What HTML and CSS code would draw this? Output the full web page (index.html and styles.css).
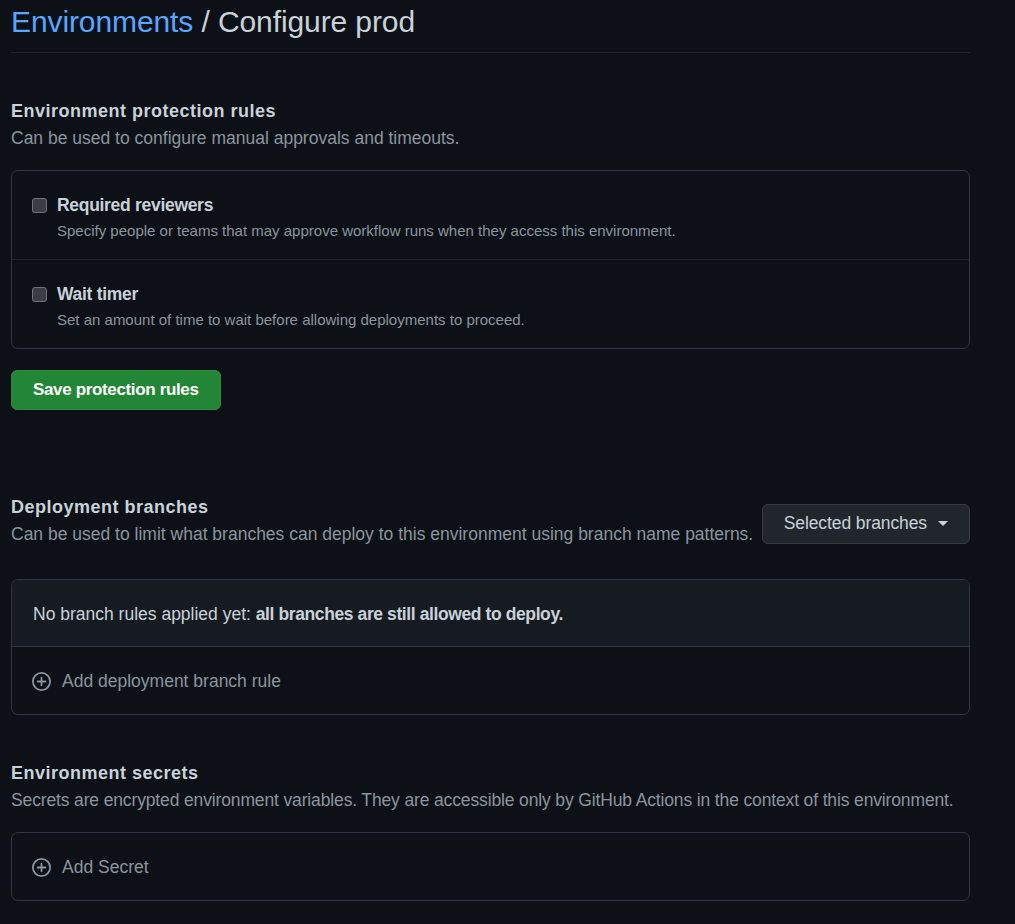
FILE: index.html
```html
<!DOCTYPE html>
<html lang="en">
<head>
<meta charset="utf-8">
<title>Configure prod</title>
<link rel="stylesheet" href="styles.css">
</head>
<body>
<div class="page">
  <div class="subhead">
    <h1 class="title"><a class="crumb" href="#">Environments</a> / Configure prod</h1>
  </div>

  <section class="section">
    <div class="section-head">
      <h2 class="heading">Environment protection rules</h2>
      <p class="desc">Can be used to configure manual approvals and timeouts.</p>
    </div>
    <div class="box">
      <label class="rule">
        <input type="checkbox" class="check">
        <span class="rule-text">
          <span class="rule-label">Required reviewers</span>
          <span class="rule-note">Specify people or teams that may approve workflow runs when they access this environment.</span>
        </span>
      </label>
      <label class="rule">
        <input type="checkbox" class="check">
        <span class="rule-text">
          <span class="rule-label">Wait timer</span>
          <span class="rule-note">Set an amount of time to wait before allowing deployments to proceed.</span>
        </span>
      </label>
    </div>
    <button class="btn btn-primary" type="button">Save protection rules</button>
  </section>

  <section class="section section-branches">
    <div class="head-row">
      <div class="section-head">
        <h2 class="heading">Deployment branches</h2>
        <p class="desc">Can be used to limit what branches can deploy to this environment using branch name patterns.</p>
      </div>
      <button class="btn btn-select" type="button">Selected branches <span class="caret"></span></button>
    </div>
    <div class="box box-branches">
      <div class="box-header">No branch rules applied yet: <strong>all branches are still allowed to deploy.</strong></div>
      <div class="box-row add-row">
        <svg class="plus" viewBox="0 0 16 16" width="19" height="19" aria-hidden="true"><path fill="currentColor" d="M8 0a8 8 0 1 1 0 16A8 8 0 0 1 8 0ZM1.5 8a6.5 6.5 0 1 0 13 0 6.5 6.5 0 0 0-13 0Zm7.25-3.25v2.5h2.5a.75.75 0 0 1 0 1.5h-2.5v2.5a.75.75 0 0 1-1.5 0v-2.5h-2.5a.75.75 0 0 1 0-1.5h2.5v-2.5a.75.75 0 0 1 1.5 0Z"/></svg>
        <span>Add deployment branch rule</span>
      </div>
    </div>
  </section>

  <section class="section">
    <div class="section-head">
      <h2 class="heading">Environment secrets</h2>
      <p class="desc desc-tight">Secrets are encrypted environment variables. They are accessible only by GitHub Actions in the context of this environment.</p>
    </div>
    <div class="box">
      <div class="box-row add-row">
        <svg class="plus" viewBox="0 0 16 16" width="19" height="19" aria-hidden="true"><path fill="currentColor" d="M8 0a8 8 0 1 1 0 16A8 8 0 0 1 8 0ZM1.5 8a6.5 6.5 0 1 0 13 0 6.5 6.5 0 0 0-13 0Zm7.25-3.25v2.5h2.5a.75.75 0 0 1 0 1.5h-2.5v2.5a.75.75 0 0 1-1.5 0v-2.5h-2.5a.75.75 0 0 1 0-1.5h2.5v-2.5a.75.75 0 0 1 1.5 0Z"/></svg>
        <span>Add Secret</span>
      </div>
    </div>
  </section>
</div>
</body>
</html>
```

FILE: styles.css
```css
* { box-sizing: border-box; }

html, body {
  margin: 0;
  background: #0d1117;
}

body {
  font-family: "Liberation Sans", Arial, sans-serif;
  color: #c9d1d9;
  font-size: 17.5px;
}

.page {
  width: 959px;
  margin-left: 11px;
}

.subhead {
  padding-top: 2px;
  padding-bottom: 10px;
  border-bottom: 1px solid #21262d;
}

.title {
  margin: 0;
  font-size: 30px;
  line-height: 40px;
  font-weight: 400;
  color: #c9d1d9;
  letter-spacing: -0.1px;
}

.crumb {
  color: #58a6ff;
  text-decoration: none;
}

.section {
  margin-top: 46px;
}

.section-branches {
  margin-top: 85px;
}

.heading {
  margin: 0;
  font-size: 18px;
  line-height: 24px;
  font-weight: 700;
  letter-spacing: 0.5px;
  color: #c9d1d9;
}

.desc {
  margin: 2px 0 0;
  font-size: 17.5px;
  line-height: 26px;
  color: #8b949e;
}

.desc-tight {
  letter-spacing: -0.14px;
  white-space: nowrap;
}

.box {
  margin-top: 19px;
  border: 1px solid #30363d;
  border-radius: 7px;
  overflow: hidden;
}

.box-branches {
  margin-top: 32px;
}

.rule {
  display: flex;
  align-items: flex-start;
  gap: 10px;
  padding: 22px 20px 17px;
}

.rule + .rule {
  border-top: 1px solid #21262d;
}

.check {
  appearance: none;
  -webkit-appearance: none;
  margin: 5px 0 0;
  width: 15px;
  height: 15px;
  flex: none;
  background: #3a3d43;
  border: 1px solid #6e7379;
  border-radius: 3px;
}

.rule-text {
  display: flex;
  flex-direction: column;
}

.rule-label {
  font-size: 17.5px;
  line-height: 24px;
  font-weight: 700;
  letter-spacing: -0.3px;
  color: #c9d1d9;
}

.rule-note {
  margin-top: 3px;
  font-size: 15px;
  line-height: 22px;
  color: #8b949e;
}

.btn {
  font-family: inherit;
  height: 40px;
  padding: 0 21px;
  border-radius: 6px;
  font-size: 17.5px;
  cursor: pointer;
}

.btn-primary {
  margin-top: 21px;
  display: block;
  background: #238636;
  border: 1px solid #2c8a3e;
  color: #ffffff;
  font-size: 17px;
  font-weight: 700;
  letter-spacing: -0.35px;
}

.head-row {
  display: flex;
  align-items: center;
  justify-content: space-between;
}

.btn-select {
  display: flex;
  align-items: center;
  gap: 11px;
  background: #21262d;
  border: 1px solid #363b42;
  color: #c9d1d9;
  font-weight: 400;
  margin-top: 5px;
  letter-spacing: -0.1px;
}

.caret {
  width: 0;
  height: 0;
  border-left: 5px solid transparent;
  border-right: 5px solid transparent;
  border-top: 5px solid #c9d1d9;
}

.box-header {
  background: #161b22;
  padding: 21px 21px 19px;
  line-height: 26px;
  border-bottom: 1px solid #30363d;
  color: #c9d1d9;
}

.box-header strong {
  font-weight: 700;
  letter-spacing: -0.4px;
}

.box-row {
  padding: 21px 20px 20px;
  line-height: 26px;
}

.add-row {
  display: flex;
  align-items: center;
  gap: 11px;
  color: #8b949e;
}

.plus {
  flex: none;
  color: #8b949e;
}
```
